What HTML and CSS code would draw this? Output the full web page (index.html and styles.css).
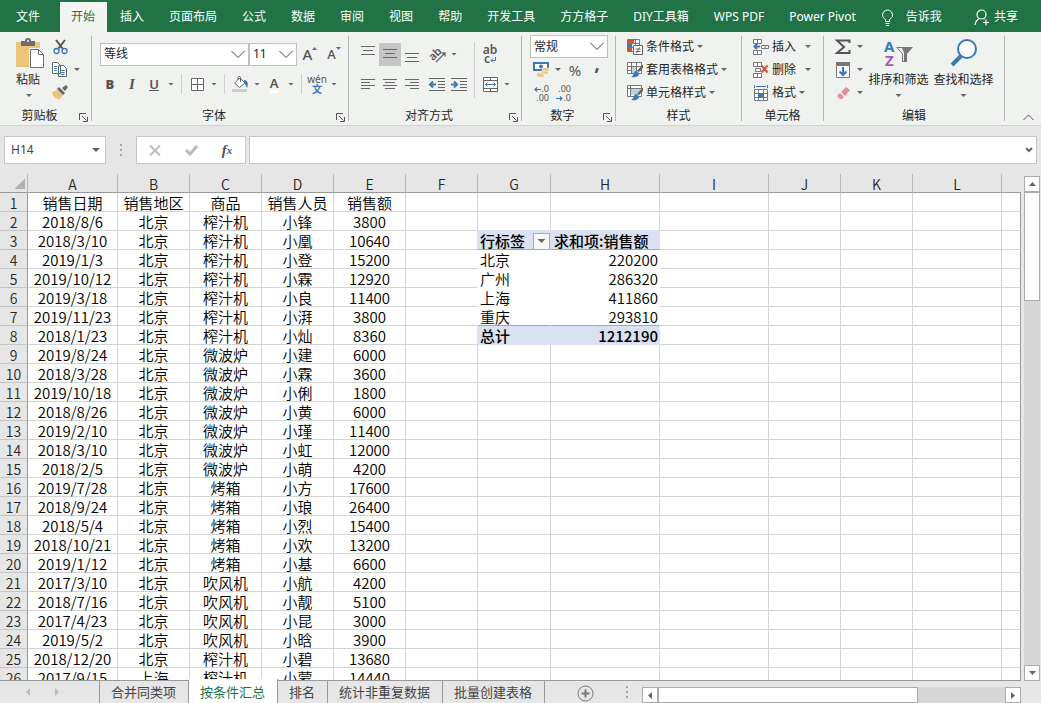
FILE: index.html
```
<!doctype html>
<html lang="zh-CN">
<head>
    <meta charset="UTF-8">
    <meta name="viewport" content="width=device-width, initial-scale=1.0">
    <title>销售汇总</title>
    <link rel="stylesheet" href="styles.css">
</head>
<body>
    <nav class="tabs">
        <button class="tab file">文件</button>
        <button class="tab active">开始</button>
        <button class="tab">插入</button>
        <button class="tab">页面布局</button>
        <button class="tab">公式</button>
        <button class="tab">数据</button>
        <button class="tab">审阅</button>
        <button class="tab">视图</button>
        <button class="tab">帮助</button>
        <button class="tab">开发工具</button>
        <button class="tab">方方格子</button>
        <button class="tab">DIY工具箱</button>
        <button class="tab">WPS PDF</button>
        <button class="tab">Power Pivot</button>
        <button class="tab tell">
            <svg width="13" height="17" viewBox="0 0 13 17" fill="none" stroke="#fff"><path d="M4.5 12.5v-2C2.5 9 1.5 8 1.500 6a5 5 0 0 1 10 0c0 2-1 3-3 4.500v2zM4.500 14.500h4M5 16.500h3"/></svg>
            告诉我
        </button>
        <button class="tab share">
            <svg width="16" height="17" viewBox="0 0 16 17" fill="none" stroke="#fff" stroke-width="1.200"><circle cx="7.500" cy="5.500" r="4.500"/><path d="M1 16c.5-3.500 2-5.500 4.500-6.500M9.500 9.500l1 .7M9 13.500h6M12 10.500v6"/></svg>
            共享
        </button>
    </nav>

    <div class="ribbon">
        <section class="group clipboard">
            <div class="group-body">
                <button class="big paste">
                    <svg width="28" height="31" viewBox="0 0 28 31"><path fill="#ebc57c" d="M0 4h24v25H0z"/><path fill="#6d6d6d" d="M5 8V3h4a3 3 0 0 1 6 0h4v5z"/><circle cx="12" cy="3" r="1" fill="#f0f1ef"/><path fill="#fff" stroke="#f0f1ef" stroke-width="3" d="M14.500 11.500h8l5 5v13h-13z"/><path fill="#fff" stroke="#6d6d6d" d="M14.500 11.500h8l5 5v13h-13zM22.500 11.500v5h5"/></svg>
                    <span>粘贴</span><i class="caret"></i>
                </button>
                <div class="stack">
                    <div class="line">
                        <button class="btn" aria-label="剪切"><svg width="15" height="16" viewBox="0 0 15 16" fill="none"><path stroke="#555" stroke-width="2" d="M3 1l7 9M12 1L5 10"/><circle cx="3.500" cy="12" r="2.500" stroke="#3c78b8" stroke-width="1.300"/><circle cx="11.500" cy="12" r="2.500" stroke="#3c78b8" stroke-width="1.300"/></svg></button>
                    </div>
                    <div class="line">
                        <button class="btn" aria-label="复制"><svg width="16" height="15" viewBox="0 0 16 15" fill="#fff" stroke="#666"><path d="M.5.500h5l3 3v8h-8zM6.500 3.500h5l3 3v8h-8z"/><path stroke="#3c78b8" d="M2 4.500h3M2 6.500h3M2 8.500h3M8.500 8.500h4M8.500 10.500h4M8.500 12.500h4"/></svg></button><i class="caret"></i>
                    </div>
                    <div class="line">
                        <button class="btn" aria-label="格式刷"><svg width="17" height="15" viewBox="0 0 17 15"><path fill="#ebc57c" d="M0 7l5-2 6 5-4 5-2-2-1 1-2-3-1 0z"/><path fill="#666" d="M5 4l2-2 6 6-2 2zM10 3l4-3 2 2-3 4z"/></svg></button>
                    </div>
                </div>
            </div>
            <div class="group-label"><span>剪贴板</span><svg class="launcher" width="9" height="9" viewBox="0 0 9 9"><path fill="none" stroke="#555" d="M.5 7V.5H7M3 3l4.500 4.500M8.500 4v4.500H4"/></svg></div>
        </section>

        <section class="group font">
            <div class="group-body rows">
                <div class="line">
                    <span class="combo family"><select aria-label="字体"><option>等线</option></select><svg width="14" height="9" viewBox="0 0 14 9"><path d="M.5 1L7 7.500 13.500 1"/></svg></span>
                    <span class="combo size"><select aria-label="字号"><option>11</option></select><svg width="14" height="9" viewBox="0 0 14 9"><path d="M.5 1L7 7.500 13.500 1"/></svg></span>
                    <button class="btn grow">A<svg width="5" height="3" viewBox="0 0 5 3"><path fill="#3c78b8" d="M0 3L2.500 0 5 3z"/></svg></button>
                    <button class="btn grow shrink">A<svg width="5" height="3" viewBox="0 0 5 3"><path fill="#3c78b8" d="M0 0h5L2.500 3z"/></svg></button>
                </div>
                <div class="line tools">
                    <button class="btn letter"><b>B</b></button>
                    <button class="btn letter italic"><em>I</em></button>
                    <button class="btn letter"><u>U</u></button><i class="caret"></i>
                    <span class="sep"></span>
                    <button class="btn" aria-label="边框"><svg width="13" height="13" viewBox="0 0 13 13"><path fill="#fff" stroke="#666" d="M.5.500h12v12H.5zM6.500.500v12M.5 6.500h12"/></svg></button><i class="caret"></i>
                    <span class="sep"></span>
                    <button class="btn" aria-label="填充颜色"><svg width="17" height="16" viewBox="0 0 17 16"><path fill="#ccc" d="M0 13h15v3H0z"/><path fill="#fff" stroke="#666" d="M2.500 7L8 2l5 5-5.500 4.500zM6 4V1.500C6 0 8.500 0 8.500 1.500V6"/><path fill="#3c78b8" d="M12 4c3 0 5 3 3 8-1-1-1-4-3-5z"/></svg></button><i class="caret"></i>
                    <button class="btn letter color"><span>A</span></button><i class="caret"></i>
                    <span class="sep"></span>
                    <button class="btn phonetic"><span>wén</span><span>文</span></button><i class="caret"></i>
                </div>
            </div>
            <div class="group-label"><span>字体</span><svg class="launcher" width="9" height="9" viewBox="0 0 9 9"><path fill="none" stroke="#555" d="M.5 7V.5H7M3 3l4.500 4.500M8.500 4v4.500H4"/></svg></div>
        </section>

        <section class="group align">
            <div class="group-body">
                <div class="rows">
                    <div class="line">
                        <button class="btn" aria-label="顶端对齐"><svg width="14" height="16" viewBox="0 0 14 16" stroke="#666"><path d="M0 .500h14M2 4.500h10M0 8.500h14"/></svg></button>
                        <button class="btn pressed" aria-label="垂直居中"><svg width="14" height="10" viewBox="0 0 14 10" stroke="#666"><path d="M0 .500h14M2 4.500h10M0 8.500h14"/></svg></button>
                        <button class="btn" aria-label="底端对齐"><svg width="14" height="16" viewBox="0 0 14 16" stroke="#666"><path d="M0 7.500h14M2 11.500h10M0 15.500h14"/></svg></button>
                        <button class="btn indent" aria-label="方向"><svg width="17" height="17" viewBox="0 0 17 17"><text x="0" y="12" font-size="11" font-weight="600" fill="#555" transform="rotate(-45 6 9)">ab</text><path fill="none" stroke="#666" stroke-width="1.300" d="M7 16L16 7M12.500 7H16v3.500"/></svg></button><i class="caret"></i>
                    </div>
                    <div class="line">
                        <button class="btn" aria-label="左对齐"><svg width="14" height="11" viewBox="0 0 14 11" stroke="#666"><path d="M0 .500h14M0 3.500h9M0 6.500h14M0 9.500h9"/></svg></button>
                        <button class="btn" aria-label="居中"><svg width="14" height="11" viewBox="0 0 14 11" stroke="#666"><path d="M0 .500h14M2 3.500h10M0 6.500h14M2 9.500h10"/></svg></button>
                        <button class="btn" aria-label="右对齐"><svg width="14" height="11" viewBox="0 0 14 11" stroke="#666"><path d="M0 .500h14M5 3.500h9M0 6.500h14M5 9.500h9"/></svg></button>
                        <button class="btn indent" aria-label="减少缩进"><svg width="16" height="13" viewBox="0 0 16 13" fill="none" stroke="#666"><path d="M0 .500h16M9 3.500h7M9 6.500h7M9 9.500h7M0 12.500h16"/><path stroke="#3c78b8" stroke-width="2" d="M1 6.500h6M4 3.500l-3 3 3 3"/></svg></button>
                        <button class="btn" aria-label="增加缩进"><svg width="16" height="13" viewBox="0 0 16 13" fill="none" stroke="#666"><path d="M0 .500h16M9 3.500h7M9 6.500h7M9 9.500h7M0 12.500h16"/><path stroke="#3c78b8" stroke-width="2" d="M0 6.500h6M3 3.500l3 3-3 3"/></svg></button>
                    </div>
                </div>
                <span class="sep tall"></span>
                <div class="rows">
                    <div class="line">
                        <button class="btn wrap" aria-label="自动换行"><span>ab</span><span>c<svg width="6" height="6" viewBox="0 0 6 6"><path fill="none" stroke="#3c78b8" d="M5.500 0v3.500H1M3 1.500l-2 2 2 2"/></svg></span></button>
                    </div>
                    <div class="line">
                        <button class="btn" aria-label="合并后居中"><svg width="15" height="15" viewBox="0 0 15 15"><path fill="#fff" stroke="#666" d="M.5.500h14v14H.5zM.5 3.500h14M.5 11.500h14M7.500.500v3M7.500 11.500v3"/><path fill="none" stroke="#3c78b8" d="M2 7.500h11M4.500 5.500l-2 2 2 2M10.500 5.500l2 2-2 2"/></svg></button><i class="caret"></i>
                    </div>
                </div>
            </div>
            <div class="group-label"><span>对齐方式</span><svg class="launcher" width="9" height="9" viewBox="0 0 9 9"><path fill="none" stroke="#555" d="M.5 7V.5H7M3 3l4.500 4.500M8.500 4v4.500H4"/></svg></div>
        </section>

        <section class="group number">
            <div class="group-body stack">
                <div class="line">
                    <span class="combo"><select aria-label="数字格式"><option>常规</option></select><svg width="14" height="9" viewBox="0 0 14 9"><path d="M.5 1L7 7.500 13.500 1"/></svg></span>
                </div>
                <div class="line">
                    <button class="btn" aria-label="会计数字格式"><svg width="17" height="16" viewBox="0 0 17 16"><path fill="#fff" stroke="#3c78b8" stroke-width="2" d="M1 1h14v7H1z"/><circle cx="8" cy="4.500" r="2" fill="#3c78b8"/><path fill="#ebc57c" stroke="#f0f1ef" stroke-width=".5" d="M9 6h7v3H9zM8 9h7v3H8zM4 11h7v4H4z"/></svg></button><i class="caret"></i>
                    <button class="btn percent">%</button>
                    <button class="btn comma">,</button>
                </div>
                <div class="line">
                    <button class="btn decimal"><span><svg width="7" height="5" viewBox="0 0 7 5"><path fill="none" stroke="#3c78b8" stroke-width="1.200" d="M7 2.500H1M3 .5l-2 2 2 2"/></svg>.0</span><span>.00</span></button>
                    <button class="btn decimal"><span>.00</span><span><svg width="7" height="5" viewBox="0 0 7 5"><path fill="none" stroke="#3c78b8" stroke-width="1.200" d="M0 2.500h6M4 .5l2 2-2 2"/></svg>.0</span></button>
                </div>
            </div>
            <div class="group-label"><span>数字</span><svg class="launcher" width="9" height="9" viewBox="0 0 9 9"><path fill="none" stroke="#555" d="M.5 7V.5H7M3 3l4.500 4.500M8.500 4v4.500H4"/></svg></div>
        </section>

        <section class="group styles">
            <div class="group-body stack">
                <button class="item"><svg width="16" height="16" viewBox="0 0 16 16"><path fill="#fff" stroke="#777" d="M.5.500h12v12H.5zM4.500.500v12M8.500.500v12M.5 4.500h12M.5 8.500h12"/><path fill="#d35230" d="M1 1h6v3H1zM1 9h3v3H1z"/><path fill="#3c78b8" d="M1 5h4v3H1z"/><path fill="#fff" stroke="#666" d="M6.500 6.500h9v9h-9zM8.500 10h5M8.500 12.500h5M12.500 8.500l-3 5.500"/></svg>条件格式<i class="caret"></i></button>
                <button class="item"><svg width="16" height="16" viewBox="0 0 16 16"><path fill="#fff" stroke="#777" d="M.5.500h14v11H.5zM4.500.500v11M9.500.500v11M.5 4.500h14M.5 8.500h14"/><path fill="#bcd0e8" d="M5 5h4v6H5z"/><path fill="#666" d="M15 3l1 0v3l-4 4-2-1z"/><path fill="#3c78b8" d="M9 9l3 2c0 4-4 5-8 4 3-1 2-5 5-6z"/></svg>套用表格格式<i class="caret"></i></button>
                <button class="item"><svg width="16" height="16" viewBox="0 0 16 16"><path fill="#fff" stroke="#777" d="M.5.500h14v11H.5zM3.500.500v11M.5 3.500h14"/><path fill="#bcd0e8" d="M4 4h9v6H4z"/><path fill="#666" d="M15 3l1 0v3l-4 4-2-1z"/><path fill="#3c78b8" d="M9 9l3 2c0 4-4 5-8 4 3-1 2-5 5-6z"/></svg>单元格样式<i class="caret"></i></button>
            </div>
            <div class="group-label"><span>样式</span></div>
        </section>

        <section class="group cells">
            <div class="group-body stack">
                <button class="item wide"><svg width="16" height="16" viewBox="0 0 16 16"><path fill="#fff" stroke="#777" d="M.5.500h8v4h-8zM4.500.500v4M.5 11.500h8v4h-8zM4.500 11.500v4M8.500 6.500h7v3h-7zM12 6.500v3"/><path fill="none" stroke="#3c78b8" stroke-width="2" d="M1 7.500h6M4 5L1.500 7.500 4 10"/></svg>插入<i class="caret"></i></button>
                <button class="item wide"><svg width="16" height="16" viewBox="0 0 16 16"><path fill="#fff" stroke="#777" d="M.5.500h8v4h-8zM4.500.500v4M.5 11.500h8v4h-8zM4.500 11.500v4M2.500 6.500h5v3h-5z"/><path fill="none" stroke="#d35230" stroke-width="2" d="M8.500 3.500l6 7M14.500 3.500l-6 7"/></svg>删除<i class="caret"></i></button>
                <button class="item"><svg width="16" height="16" viewBox="0 0 16 16"><path fill="#fff" stroke="#777" d="M1.500 4.500h13v11h-13zM5.500 4.500v11M10.500 4.500v11M1.500 8.500h13M1.500 12.500h13"/><path fill="#3c78b8" d="M5 8h6v5H5z"/><path fill="none" stroke="#3c78b8" d="M1.500 0v3M14.500 0v3M3 1.500h10"/></svg>格式<i class="caret"></i></button>
            </div>
            <div class="group-label"><span>单元格</span></div>
        </section>

        <section class="group edit">
            <div class="group-body">
                <div class="stack">
                    <div class="line">
                        <button class="btn" aria-label="自动求和"><svg width="16" height="16" viewBox="0 0 16 16"><path fill="none" stroke="#555" stroke-width="2" d="M14.500 4V1.500H2L9 8l-7 6h12.500V11"/></svg></button><i class="caret"></i>
                    </div>
                    <div class="line">
                        <button class="btn" aria-label="填充"><svg width="14" height="16" viewBox="0 0 14 16"><path fill="#fff" stroke="#777" d="M.5.500h13v15H.5z"/><path fill="#777" d="M0 0h14v4H0z"/><path fill="none" stroke="#3c78b8" stroke-width="2" d="M7 5v8M3.500 9.500L7 13l3.500-3.500"/></svg></button><i class="caret"></i>
                    </div>
                    <div class="line">
                        <button class="btn" aria-label="清除"><svg width="13" height="12" viewBox="0 0 13 12"><path fill="#e88a98" d="M4 5l5-5 4 3-5 6zM3 6l4 4-2 2H3L0 9z"/></svg></button><i class="caret"></i>
                    </div>
                </div>
                <button class="big">
                    <svg width="30" height="31" viewBox="0 0 30 31"><text x="0" y="14" font-size="15" font-weight="bold" fill="#3c78b8">A</text><text x="1" y="28" font-size="15" font-weight="bold" fill="#9b5fb8">Z</text><path fill="#777" d="M12 9h17l-6 7v8h-5v-8z"/><path fill="#f0f1ef" d="M14 10h4l2 5v8h-1v-7z"/></svg>
                    <span>排序和筛选</span><i class="caret"></i>
                </button>
                <button class="big">
                    <svg width="28" height="31" viewBox="0 0 28 31"><path stroke="#3c78b8" stroke-width="4" d="M2 27l9-9"/><circle cx="17" cy="11" r="9" fill="#fff" stroke="#3c78b8" stroke-width="2"/></svg>
                    <span>查找和选择</span><i class="caret"></i>
                </button>
            </div>
            <div class="group-label"><span>编辑</span></div>
        </section>

        <button class="collapse" aria-label="折叠功能区"><svg width="11" height="7" viewBox="0 0 11 7"><path fill="none" stroke="#555" d="M.5 6l5-5 5 5"/></svg></button>
    </div>

    <div class="formula-bar">
        <div class="name-box"><input type="text" value="H14" aria-label="名称框"><i class="caret dark"></i></div>
        <span class="dots"></span>
        <div class="fx">
            <button aria-label="取消"><svg width="12" height="11" viewBox="0 0 12 11"><path stroke="#bbb" stroke-width="2" d="M1 .500l10 10M11 .500l-10 10"/></svg></button>
            <button aria-label="输入"><svg width="13" height="11" viewBox="0 0 13 11"><path fill="none" stroke="#bbb" stroke-width="3" d="M1 5l4 4 7-8"/></svg></button>
            <button class="fn">f<small>x</small></button>
        </div>
        <div class="formula"><input type="text" aria-label="编辑栏"><svg width="8" height="6" viewBox="0 0 8 6"><path fill="none" stroke="#666" stroke-width="2" d="M1 1l3 3 3-3"/></svg></div>
    </div>

    <main class="sheet">
        <div class="grid">
            <table>
                <colgroup>
                    <col class="c-num"><col class="c-date"><col><col><col><col><col><col class="c-g"><col class="c-h"><col class="c-h"><col><col><col class="c-l"><col class="c-rest">
                </colgroup>
                <thead>
                    <tr><th class="corner"></th><th>A</th><th>B</th><th>C</th><th>D</th><th>E</th><th>F</th><th>G</th><th>H</th><th>I</th><th>J</th><th>K</th><th>L</th><th></th></tr>
                </thead>
                <tbody id="rows"></tbody>
            </table>
        </div>
        <div class="scroll vertical">
            <button aria-label="向上"><svg width="7" height="4" viewBox="0 0 7 4"><path d="M0 4l3.500-4L7 4z"/></svg></button>
            <div class="track"><div class="thumb"></div></div>
            <button aria-label="向下"><svg width="7" height="4" viewBox="0 0 7 4"><path d="M0 0h7L3.500 4z"/></svg></button>
        </div>
    </main>

    <footer class="bottom">
        <div class="sheet-nav">
            <svg width="4" height="8" viewBox="0 0 4 8"><path fill="#bbb" d="M4 0v8L0 4z"/></svg>
            <svg width="4" height="8" viewBox="0 0 4 8"><path fill="#bbb" d="M0 0v8l4-4z"/></svg>
        </div>
        <button class="sheet-tab">合并同类项</button>
        <button class="sheet-tab current">按条件汇总</button>
        <button class="sheet-tab">排名</button>
        <button class="sheet-tab">统计非重复数据</button>
        <button class="sheet-tab">批量创建表格</button>
        <button class="add" aria-label="新工作表"><svg width="17" height="17" viewBox="0 0 17 17"><circle cx="8.500" cy="8.500" r="7.500" fill="none" stroke="#777"/><path stroke="#777" stroke-width="2" d="M4.500 8.500h8M8.500 4.500v8"/></svg></button>
        <span class="dots"></span>
        <div class="scroll horizontal">
            <button aria-label="向左"><svg width="4" height="7" viewBox="0 0 4 7"><path d="M4 0v7L0 3.500z"/></svg></button>
            <div class="track"><div class="thumb"></div></div>
            <button aria-label="向右"><svg width="4" height="7" viewBox="0 0 4 7"><path d="M0 0v7l4-3.500z"/></svg></button>
        </div>
    </footer>

    <script src="script.js"></script>
</body>
</html>
```
FILE: styles.css
```
* {
    margin: 0;
    padding: 0;
    box-sizing: border-box;
}

body {
    display: flex;
    flex-direction: column;
    height: 100vh;
    overflow: hidden;
    background: #e6e6e6;
    color: #262626;
    font-family: "Noto Sans", "Noto Sans CJK SC", sans-serif;
    font-size: 12px;
    line-height: 16px;
}

button,
input,
select {
    border: none;
    background: none;
    color: inherit;
    font: inherit;
}

button {
    display: flex;
    align-items: center;
    justify-content: center;
    white-space: nowrap;
}

svg {
    flex: none;
    overflow: visible;
}

/* ribbon tabs */
.tabs {
    display: flex;
    flex: none;
    gap: 1px;
    height: 32px;
    padding-top: 2px;
    background: #217346;
}

.tab {
    padding: 0 12px;
    color: #fff;
}

.tab.file {
    padding: 0 19px 0 16px;
}

.tab.active {
    padding: 0 12px 0 11px;
    background: #f3f5f2;
    color: #217346;
}

.tab.tell {
    gap: 12px;
}

.tab.share {
    gap: 4px;
    margin-left: auto;
    padding-right: 23px;
}

/* ribbon */
.ribbon {
    display: flex;
    flex: none;
    border-bottom: 1px solid #d2d2d2;
    background: #f0f2ef;
}

.group {
    display: flex;
    flex-direction: column;
    flex: none;
    padding: 3px 1px 0 0;
    background: linear-gradient(#b4b4b4, #b4b4b4) right 4px / 1px 85px no-repeat;
}

.group-body {
    display: flex;
    height: 70px;
}

.stack,
.rows {
    display: flex;
    flex-direction: column;
}

.rows {
    padding-top: 4px;
}

.line {
    display: flex;
    align-items: center;
}

.stack .line,
.stack .item {
    height: 23px;
}

.rows .line {
    height: 30px;
}

.group-label {
    display: flex;
    align-items: center;
    height: 20px;
    padding-top: 2px;
    text-align: center;
}

.group-label span {
    flex: 1;
}

.launcher {
    margin: 2px 3px 0 0;
}

.clipboard { width: 92px; }
.font { width: 257px; }
.align { width: 173px; }
.number { width: 94px; }
.styles { width: 126px; }
.cells { width: 82px; }
.edit { width: 181px; }

.clipboard .group-body {
    padding-left: 14px;
}

.clipboard .stack {
    margin-left: 3px;
}

.font .group-body,
.align .group-body,
.number .group-body,
.edit .group-body {
    padding-left: 8px;
}

.styles .group-body,
.cells .group-body {
    padding-left: 11px;
}

.btn {
    width: 22px;
    height: 23px;
    color: #555;
}

.btn.pressed {
    background: #c6c6c6;
}

.btn.indent {
    margin-left: 3px;
}

.caret {
    flex: none;
    width: 12px;
    height: 3px;
    background: #666;
    clip-path: polygon(3px 0, 9px 0, 6px 3px);
}

.caret.dark {
    width: 14px;
    height: 4px;
    clip-path: polygon(3px 0, 11px 0, 7px 4px);
}

.sep {
    width: 1px;
    height: 20px;
    margin: 0 4px;
    background: #d0d0d0;
}

.sep.tall {
    height: 56px;
    margin-top: 7px;
}

.big {
    flex-direction: column;
    justify-content: flex-start;
    width: 65px;
    padding-top: 3px;
}

.big span {
    margin: 1px 0 4px;
    line-height: 20px;
}

.big.paste {
    width: 32px;
    align-items: flex-start;
    padding-left: 2px;
}

.big.paste .caret {
    margin-left: 7px;
}

.combo {
    display: grid;
    align-items: center;
    height: 23px;
    border: 1px solid #c0c0c0;
    background: #fff;
}

.combo select,
.combo svg {
    grid-area: 1 / 1;
}

.combo select {
    width: 100%;
    height: 21px;
    padding-left: 3px;
    appearance: none;
}

.combo svg {
    justify-self: end;
    margin-right: 3px;
    fill: none;
    stroke: #444;
    pointer-events: none;
}

.combo.family {
    width: 149px;
}

.combo.size {
    width: 48px;
}

.number .combo {
    width: 78px;
}

.btn.grow {
    align-items: flex-start;
    margin-left: 2px;
    font-size: 15px;
    font-weight: 500;
    line-height: 22px;
}

.btn.grow svg {
    margin-top: 4px;
}

.btn.shrink {
    font-size: 13px;
}

.font .tools {
    margin-left: -1px;
}

.letter {
    font-size: 13px;
    font-weight: 600;
}

.letter.italic {
    font-family: "Liberation Serif", serif;
    font-size: 15px;
}

.letter.color span {
    height: 18px;
    border-bottom: 3px solid #fff;
    line-height: 16px;
}

.phonetic {
    flex-direction: column;
    font-size: 10px;
    line-height: 10px;
}

.phonetic span:last-child {
    color: #3c78b8;
    font-weight: bold;
}

.wrap {
    flex-direction: column;
    font-size: 12px;
    font-weight: 600;
    line-height: 9px;
}

.percent {
    font-size: 15px;
}

.comma {
    align-items: flex-start;
    font-size: 20px;
    font-weight: bold;
    line-height: 10px;
}

.decimal {
    flex-direction: column;
    align-items: flex-end;
    padding-right: 3px;
    font-size: 9px;
    line-height: 9px;
}

.item {
    gap: 3px;
    justify-content: flex-start;
}

.item .caret {
    margin-left: -3px;
}

.item.wide .caret {
    margin-left: 3px;
}

.collapse {
    align-self: flex-end;
    margin: 0 7px 4px auto;
}

/* formula bar */
.formula-bar {
    display: flex;
    flex: none;
    align-items: center;
    height: 48px;
    padding: 0 4px;
}

.name-box,
.fx,
.formula {
    display: flex;
    align-items: center;
    height: 28px;
    border: 1px solid #c6c6c6;
    background: #fff;
}

.name-box {
    width: 102px;
    padding: 0 2px 0 6px;
    color: #444;
}

.name-box input {
    flex: 1;
    min-width: 0;
}

.dots {
    width: 2px;
    height: 12px;
    margin: 0 14px;
    background: repeating-linear-gradient(#aaa 0 2px, transparent 2px 5px);
}

.fx {
    justify-content: space-around;
    width: 110px;
}

.fx button {
    width: 30px;
}

.fn {
    color: #555;
    font: italic bold 15px "Liberation Serif", serif;
}

.fn small {
    font-size: 11px;
}

.formula {
    flex: 1;
    margin-left: 3px;
    padding: 0 3px;
}

.formula input {
    flex: 1;
}

/* worksheet */
.sheet {
    display: flex;
    flex: 1;
    min-height: 0;
}

.grid {
    flex: 1;
    min-width: 0;
    overflow: hidden;
    border-bottom: 1px solid #999;
}

table {
    width: 100%;
    border-collapse: separate;
    border-spacing: 0;
    table-layout: fixed;
    font-family: "Noto Sans CJK SC", sans-serif;
}

col { width: 72px; }
.c-num { width: 28px; }
.c-date { width: 90px; }
.c-g { width: 73px; }
.c-h { width: 109px; }
.c-l { width: 89px; }
.c-rest { width: auto; }

th,
td {
    height: 19px;
    padding-top: 2px;
    line-height: 16px;
}

th {
    background: #e6e6e6;
    font-size: 14px;
    font-weight: 350;
}

thead th {
    border-right: 1px solid #b8b8b8;
    border-bottom: 1px solid #999;
}

thead th:last-child {
    border-right: none;
}

.corner {
    background: linear-gradient(135deg, transparent 50%, #b0b0b0 50%) 14px 4px / 11px 11px no-repeat #e6e6e6;
}

tbody th {
    border-right: 1px solid #999;
    border-bottom: 1px solid #c4c4c4;
}

td {
    border-right: 1px solid #d4d4d4;
    border-bottom: 1px solid #d4d4d4;
    background: #fff;
    color: #000;
    font-size: 15px;
    font-weight: 350;
    text-align: center;
    white-space: nowrap;
}

td:last-child {
    border-right-color: #999;
}

td.label {
    padding-left: 2px;
    text-align: left;
}

td.value {
    padding-right: 1px;
    text-align: right;
}

td.label,
td.value,
td.before {
    border-right-color: #fff;
}

td.label,
td.value {
    border-bottom-color: #fff;
}

td.band {
    border-color: #d9e1f2;
    background: #d9e1f2;
    font-weight: 500;
}

td.above {
    border-bottom-color: #d9e1f2;
}

td.before.edge {
    border-right-color: #d9e1f2;
}

td.ruled {
    border-bottom-color: #8ea9db;
}

td.title {
    padding-left: 3px;
    text-align: left;
}

.filter-head {
    display: flex;
    align-items: center;
    justify-content: space-between;
    height: 16px;
}

.filter-head button {
    width: 17px;
    height: 17px;
    border: 1px solid #aaa;
    background: #f8f8f8;
}

/* scrollbars */
.scroll {
    display: flex;
}

.scroll button {
    flex: none;
    width: 16px;
    height: 16px;
    border: 1px solid #ababab;
    background: #fff;
    fill: #666;
}

.track {
    flex: 1;
    background: #d6d6d6;
}

.thumb {
    border: 1px solid #ababab;
    background: #fff;
}

.vertical {
    flex-direction: column;
    margin: 2px 1px 0 3px;
}

.vertical .thumb {
    height: 23%;
}

.horizontal {
    flex: 1;
    align-self: flex-end;
    margin: 0 20px 0 0;
}

.horizontal .thumb {
    width: 75%;
    height: 16px;
}

/* sheet tabs */
.bottom {
    display: flex;
    flex: none;
    align-items: center;
    height: 22px;
}

.sheet-nav {
    display: flex;
    align-items: center;
    justify-content: space-between;
    width: 100px;
    height: 22px;
    padding: 0 40px 0 26px;
    border-right: 1px solid #999;
}

.sheet-tab {
    height: 22px;
    padding: 0 12px 0 11px;
    border-right: 1px solid #999;
    color: #444;
    font-size: 13px;
}

.sheet-tab.current {
    height: 24px;
    margin-top: -2px;
    padding-top: 2px;
    background: #fff;
    color: #217346;
}

.add {
    margin: 2px 18px 0 32px;
}
```
FILE: script.js
```
const columns = 13;

const sales = [
    ['销售日期', '销售地区', '商品', '销售人员', '销售额'],
    ['2018/8/6', '北京', '榨汁机', '小锋', 3800],
    ['2018/3/10', '北京', '榨汁机', '小凰', 10640],
    ['2019/1/3', '北京', '榨汁机', '小登', 15200],
    ['2019/10/12', '北京', '榨汁机', '小霖', 12920],
    ['2019/3/18', '北京', '榨汁机', '小良', 11400],
    ['2019/11/23', '北京', '榨汁机', '小湃', 3800],
    ['2018/1/23', '北京', '榨汁机', '小灿', 8360],
    ['2019/8/24', '北京', '微波炉', '小建', 6000],
    ['2018/3/28', '北京', '微波炉', '小霖', 3600],
    ['2019/10/18', '北京', '微波炉', '小俐', 1800],
    ['2018/8/26', '北京', '微波炉', '小黄', 6000],
    ['2019/2/10', '北京', '微波炉', '小瑾', 11400],
    ['2018/3/10', '北京', '微波炉', '小虹', 12000],
    ['2018/2/5', '北京', '微波炉', '小萌', 4200],
    ['2019/7/28', '北京', '烤箱', '小方', 17600],
    ['2018/9/24', '北京', '烤箱', '小琅', 26400],
    ['2018/5/4', '北京', '烤箱', '小烈', 15400],
    ['2018/10/21', '北京', '烤箱', '小欢', 13200],
    ['2019/1/12', '北京', '烤箱', '小基', 6600],
    ['2017/3/10', '北京', '吹风机', '小航', 4200],
    ['2018/7/16', '北京', '吹风机', '小靓', 5100],
    ['2017/4/23', '北京', '吹风机', '小昆', 3000],
    ['2019/5/2', '北京', '吹风机', '小晗', 3900],
    ['2018/12/20', '北京', '榨汁机', '小碧', 13680],
    ['2017/9/15', '上海', '榨汁机', '小蒙', 14440]
];

// pivot table in G3:H8, keyed by row number
const filterHead = '<div class="filter-head">行标签<button aria-label="筛选"><i class="caret dark"></i></button></div>';
const pivot = {
    2: [['', 'above'], ['', 'above']],
    3: [[filterHead, 'label band ruled'], ['求和项:销售额', 'title band ruled']],
    4: [['北京', 'label'], ['220200', 'value']],
    5: [['广州', 'label'], ['286320', 'value']],
    6: [['上海', 'label'], ['411860', 'value']],
    7: [['重庆', 'label ruled'], ['293810', 'value ruled']],
    8: [['总计', 'label band'], ['1212190', 'value band']]
};

const body = document.getElementById('rows');
sales.forEach((record, i) => {
    const number = i + 1;
    const tr = body.insertRow();
    tr.innerHTML = `<th>${number}</th>`;
    for (let c = 0; c < columns; c++) {
        const td = tr.insertCell();
        if (c < 5) {
            td.textContent = record[c];
        } else if (c === 5 && number > 2 && number < 9) {
            td.className = number === 3 || number === 8 ? 'before edge' : 'before';
        } else if ((c === 6 || c === 7) && pivot[number]) {
            const [content, name] = pivot[number][c - 6];
            td.innerHTML = content;
            td.className = name;
        }
    }
});
```
